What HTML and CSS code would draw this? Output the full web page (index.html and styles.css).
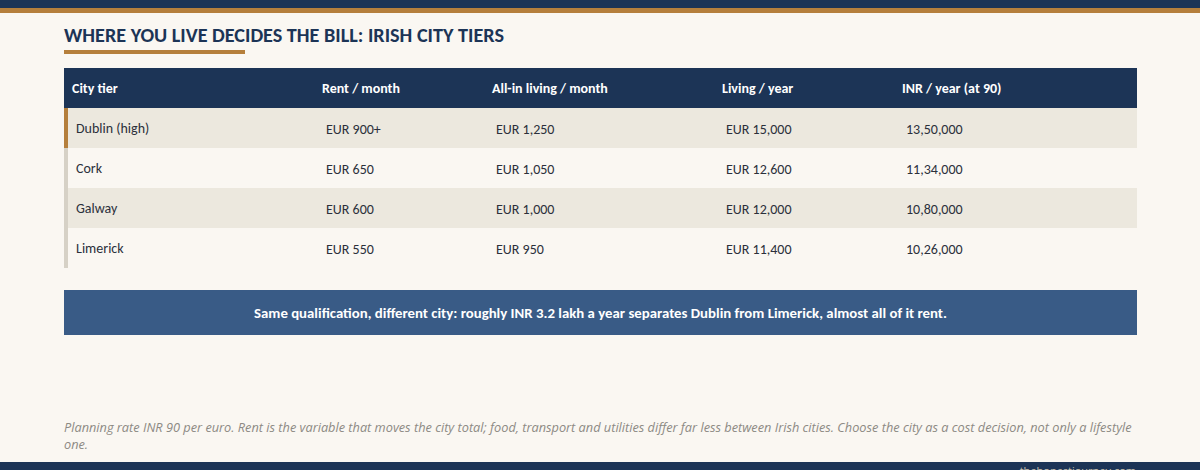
FILE: index.html
```html
<!DOCTYPE html>
<html lang="en">
<head>
<meta charset="utf-8">
<title>Irish City Tiers</title>
<link rel="stylesheet" href="styles.css">
</head>
<body>
<div class="page">
  <div class="topbar"></div>
  <main class="content">
    <h1 class="title">WHERE YOU LIVE DECIDES THE BILL: IRISH CITY TIERS</h1>
    <div class="title-rule"></div>
    <div class="table">
      <div class="row head">
        <div class="cell">City tier</div>
        <div class="cell">Rent / month</div>
        <div class="cell">All-in living / month</div>
        <div class="cell">Living / year</div>
        <div class="cell">INR / year (at 90)</div>
      </div>
      <div class="row body alt accent">
        <div class="cell">Dublin (high)</div>
        <div class="cell">EUR 900+</div>
        <div class="cell">EUR 1,250</div>
        <div class="cell">EUR 15,000</div>
        <div class="cell">13,50,000</div>
      </div>
      <div class="row body">
        <div class="cell">Cork</div>
        <div class="cell">EUR 650</div>
        <div class="cell">EUR 1,050</div>
        <div class="cell">EUR 12,600</div>
        <div class="cell">11,34,000</div>
      </div>
      <div class="row body alt">
        <div class="cell">Galway</div>
        <div class="cell">EUR 600</div>
        <div class="cell">EUR 1,000</div>
        <div class="cell">EUR 12,000</div>
        <div class="cell">10,80,000</div>
      </div>
      <div class="row body">
        <div class="cell">Limerick</div>
        <div class="cell">EUR 550</div>
        <div class="cell">EUR 950</div>
        <div class="cell">EUR 11,400</div>
        <div class="cell">10,26,000</div>
      </div>
    </div>
    <div class="banner">Same qualification, different city: roughly INR 3.2 lakh a year separates Dublin from Limerick, almost all of it rent.</div>
    <p class="note">Planning rate INR 90 per euro. Rent is the variable that moves the city total; food, transport and utilities differ far less between Irish cities. Choose the city as a cost decision, not only a lifestyle one.</p>
  </main>
</div>
<footer class="footer"><span class="site">thehonestjourney.com</span></footer>
</body>
</html>
```
FILE: styles.css
```css
* { box-sizing: border-box; }
html, body { margin: 0; padding: 0; }
body {
  background: #faf7f2;
  font-family: Carlito, Calibri, "Open Sans", "Liberation Sans", sans-serif;
  color: #2b303b;
}
.page {
  height: 462px;
  display: flex;
  flex-direction: column;
}
.topbar {
  height: 13px;
  background: #1c3456;
  border-bottom: 5px solid #b57f3c;
  flex: none;
}
.content {
  flex: 1;
  display: flex;
  flex-direction: column;
  padding: 0 63px 9px 64px;
}
.title {
  margin: 10px 0 0;
  font-size: 20.2px;
  line-height: 24px;
  font-weight: 700;
  color: #1c3456;
  letter-spacing: 0;
}
.title-rule {
  width: 181px;
  height: 4px;
  background: #b57f3c;
  margin-top: 3px;
}
.table {
  margin-top: 14px;
  display: flex;
  flex-direction: column;
}
.row {
  display: grid;
  grid-template-columns: 250px 170px 230px 180px 1fr;
  height: 40px;
  align-items: center;
}
.row.head {
  background: #1c3456;
  color: #ffffff;
  font-weight: 700;
  font-size: 14px;
}
.row.body {
  font-size: 14px;
  border-left: 4px solid #d6d1c6;
}
.row.body.alt { background: #ece8de; }
.row.body.accent { border-left-color: #b57f3c; }
.cell {
  padding-left: 8px;
  white-space: nowrap;
}
.row.body .cell { padding-top: 2px; }
.row.body .cell:first-child { padding-top: 0; }
.banner {
  margin-top: 22px;
  height: 45px;
  background: #395b86;
  color: #ffffff;
  font-weight: 700;
  font-size: 14.8px;
  display: flex;
  align-items: center;
  justify-content: center;
}
.note {
  margin: auto 0 0;
  font-family: "Open Sans", "Liberation Sans", sans-serif;
  font-style: italic;
  font-size: 12.75px;
  line-height: 17px;
  color: #8d8a84;
}
.footer {
  height: 30px;
  background: #1c3456;
  display: flex;
  justify-content: flex-end;
  padding: 1px 64px 0 0;
}
.site {
  font-family: "Open Sans", "Liberation Sans", sans-serif;
  font-size: 11px;
  line-height: 15px;
  color: #c9c1b1;
}
```
